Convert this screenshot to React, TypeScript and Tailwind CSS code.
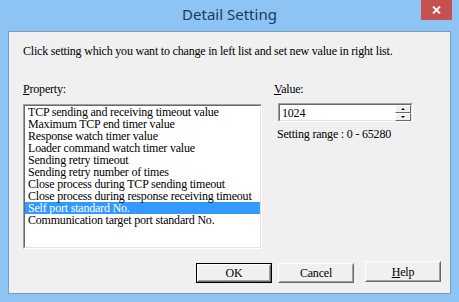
const items = [
  "TCP sending and receiving timeout value",
  "Maximum TCP end timer value",
  "Response watch timer value",
  "Loader command watch timer value",
  "Sending retry timeout",
  "Sending retry number of times",
  "Close process during TCP sending timeout",
  "Close process during response receiving timeout",
  "Self port standard No.",
  "Communication target port standard No.",
]

const serif = "font-['Liberation_Serif','Times_New_Roman',serif] tracking-[-0.2px]"

function Sunken({ className, children }: { className: string; children: React.ReactNode }) {
  return (
    <div className={`border border-t-[#a0a0a0] border-l-[#a0a0a0] border-b-white border-r-white ${className}`}>
      <div className="flex h-full w-full border border-t-[#696969] border-l-[#696969] border-b-[#e3e3e3] border-r-[#e3e3e3] bg-white">
        {children}
      </div>
    </div>
  )
}

function Button({ label, isDefault, className = "" }: { label: React.ReactNode; isDefault?: boolean; className?: string }) {
  return (
    <div className={`${isDefault ? "border border-[#000]" : ""} ${className}`}>
      <div className="h-full border border-t-white border-l-white border-b-[#696969] border-r-[#696969]">
        <div className="flex h-full items-center justify-center border border-t-[#f0f0f0] border-l-[#f0f0f0] border-b-[#a0a0a0] border-r-[#a0a0a0] bg-[#f0f0f0] text-[12px] text-black">
          {label}
        </div>
      </div>
    </div>
  )
}

function SpinButton({ up }: { up?: boolean }) {
  return (
    <div className="flex h-[8px] w-[16px] items-center justify-center border border-t-white border-l-white border-b-[#696969] border-r-[#696969] bg-[#f0f0f0]">
      <div
        className={
          up
            ? "h-0 w-0 border-x-[2px] border-b-[2px] border-x-transparent border-b-black"
            : "h-0 w-0 border-x-[2px] border-t-[2px] border-x-transparent border-t-black"
        }
      />
    </div>
  )
}

export default function App() {
  return (
    <div className="flex h-[302px] w-[459px] flex-col bg-[#8ec4f3]">
      {/* title bar */}
      <div className="relative flex h-[31px] shrink-0 items-start justify-center pt-[4px]">
        <span className="font-['Noto_Sans',sans-serif] text-[15px] leading-[20px] text-[#1b3a5c]">Detail Setting</span>
        <div className="absolute right-[7px] top-0 flex h-[20px] w-[31px] items-center justify-center bg-[#c75050]">
          <svg width="9" height="8" viewBox="0 0 9 8">
            <path d="M1 0.5 L8 7.5 M8 0.5 L1 7.5" stroke="white" strokeWidth="1.8" />
          </svg>
        </div>
      </div>

      {/* client area */}
      <div className={`mx-[8px] mb-[8px] flex flex-1 flex-col border border-[#7a9cbf] bg-[#f0f0f0] ${serif} text-[12px] text-black`}>
        <p className="ml-[14px] mt-[12px] leading-[15px]">
          Click setting which you want to change in left list and set new value in right list.
        </p>

        <div className="mt-[23px] flex">
          <div className="ml-[14px] flex w-[239px] flex-col">
            <span className="leading-[15px]">
              <span className="underline">P</span>roperty:
            </span>
            <Sunken className="mt-[7px] h-[145px] w-[239px]">
              <ul className="w-full leading-[12px]">
                {items.map((item, i) => (
                  <li
                    key={item}
                    className={`h-[12px] whitespace-nowrap pl-[3px] ${i === 8 ? "bg-[#3399ff] text-white" : ""}`}
                  >
                    {item}
                  </li>
                ))}
              </ul>
            </Sunken>
          </div>

          <div className="ml-[12px] flex flex-col">
            <span className="leading-[15px]">
              <span className="underline">V</span>alue:
            </span>
            <Sunken className="ml-[4px] mt-[6px] h-[19px] w-[135px]">
              <div className="flex w-full items-start">
                <span className="flex-1 pl-[2px] pt-[1px] leading-[14px]">1024</span>
                <div className="flex flex-col">
                  <SpinButton up />
                  <SpinButton />
                </div>
              </div>
            </Sunken>
            <span className="ml-[3px] mt-[5px] leading-[15px]">Setting range : 0 - 65280</span>
          </div>
        </div>

        <div className="mt-auto mb-[10px] flex items-end">
          <Button label="OK" isDefault className="ml-[187px] h-[20px] w-[76px]" />
          <Button label="Cancel" className="ml-[6px] h-[20px] w-[76px]" />
          <Button
            label={
              <span>
                <span className="underline">H</span>elp
              </span>
            }
            className="mb-[1px] ml-[11px] h-[21px] w-[76px]"
          />
        </div>
      </div>
    </div>
  )
}
